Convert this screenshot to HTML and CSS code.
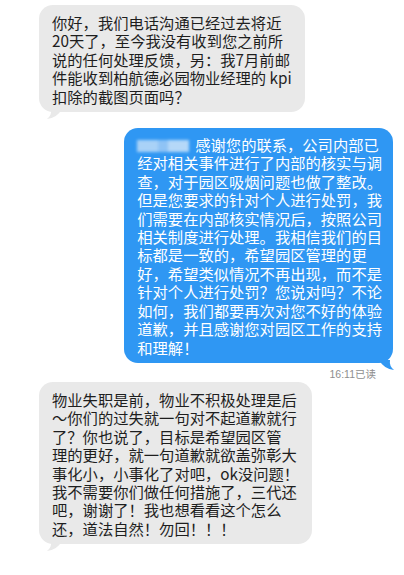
FILE: index.html
```html
<!DOCTYPE html>
<html lang="zh-CN">
<head>
    <meta charset="UTF-8">
    <meta name="viewport" content="width=device-width, initial-scale=1.0">
    <title>对话</title>
    <link rel="stylesheet" href="styles.css">
</head>
<body>
    <div class="chat">
        <div class="msg msg-in first">
            <div class="bubble grey">你好，我们电话沟通已经过去将近<br>20天了，至今我没有收到您之前所<br>说的任何处理反馈，另：我7月前邮<br>件能收到柏航德必园物业经理的 kpi<br>扣除的截图页面吗？</div>
            <svg class="tail tail-left" width="16" height="10" viewBox="0 0 16 10"><path d="M15 0 L4 0 Q5 6 0 10 Q10 9 15 0 Z" fill="#e9e9e9"/></svg>
        </div>

        <div class="msg msg-out">
            <div class="bubble blue"><span class="masked"></span>感谢您的联系，公司内部已<br>经对相关事件进行了内部的核实与调<br>查，对于园区吸烟问题也做了整改。<br>但是您要求的针对个人进行处罚，我<br>们需要在内部核实情况后，按照公司<br>相关制度进行处理。我相信我们的目<br>标都是一致的，希望园区管理的更<br>好，希望类似情况不再出现，而不是<br>针对个人进行处罚？您说对吗？不论<br>如何，我们都要再次对您不好的体验<br>道歉，并且感谢您对园区工作的支持<br>和理解！</div>
            <svg class="tail tail-right" width="16" height="10" viewBox="0 0 16 10"><path d="M1 0 L12 0 Q11 6 16 10 Q6 9 1 0 Z" fill="#2f97f3"/></svg>
        </div>
        <div class="stamp">16:11已读</div>

        <div class="msg msg-in">
            <div class="bubble grey">物业失职是前，物业不积极处理是后<br>～你们的过失就一句对不起道歉就行<br>了？你也说了，目标是希望园区管<br>理的更好，就一句道歉就欲盖弥彰大<br>事化小，小事化了对吧，ok没问题！<br>我不需要你们做任何措施了，三代还<br>吧，谢谢了！我也想看看这个怎么<br>还，道法自然！勿回！！！</div>
            <svg class="tail tail-left" width="16" height="10" viewBox="0 0 16 10"><path d="M15 0 L4 0 Q5 6 0 10 Q10 9 15 0 Z" fill="#e9e9e9"/></svg>
        </div>
    </div>
</body>
</html>
```

FILE: styles.css
```css
body {
    margin: 0;
    background-color: #fff;
    font-family: "Noto Sans CJK SC", "Noto Sans", sans-serif;
}

.chat {
    display: flex;
    flex-direction: column;
    padding-top: 5px;
}

.msg {
    position: relative;
    display: flex;
}

.msg-in {
    padding-left: 39px;
    margin-bottom: 16px;
}

.msg-out {
    justify-content: flex-end;
    padding-right: 11px;
}

.bubble {
    border-radius: 14px;
    line-height: 18.4px;
    font-size: 15.3px;
    white-space: nowrap;
}

.grey {
    background-color: #e9e9e9;
    color: #1e1e1e;
    padding: 8px 13px 7px;
}

.blue {
    background-color: #2f97f3;
    color: #fff;
    padding: 7px 11px 7px 13px;
}

.masked {
    display: inline-block;
    width: 52px;
    height: 12px;
    margin-right: 6px;
    vertical-align: -1px;
    background: linear-gradient(90deg, #a9d2f7 0 40%, #8fc3f5 40% 60%, #b5d8f8 60% 100%);
    filter: blur(1.5px);
}

.tail {
    position: absolute;
    bottom: -7px;
}

.tail-left {
    left: 47px;
}

.tail-right {
    right: 10px;
}

.stamp {
    align-self: flex-end;
    margin: 3px 28px 1px 0;
    font-size: 10.5px;
    color: #8e8e8e;
    font-family: "Liberation Sans", "Noto Sans CJK SC", sans-serif;
}
```
